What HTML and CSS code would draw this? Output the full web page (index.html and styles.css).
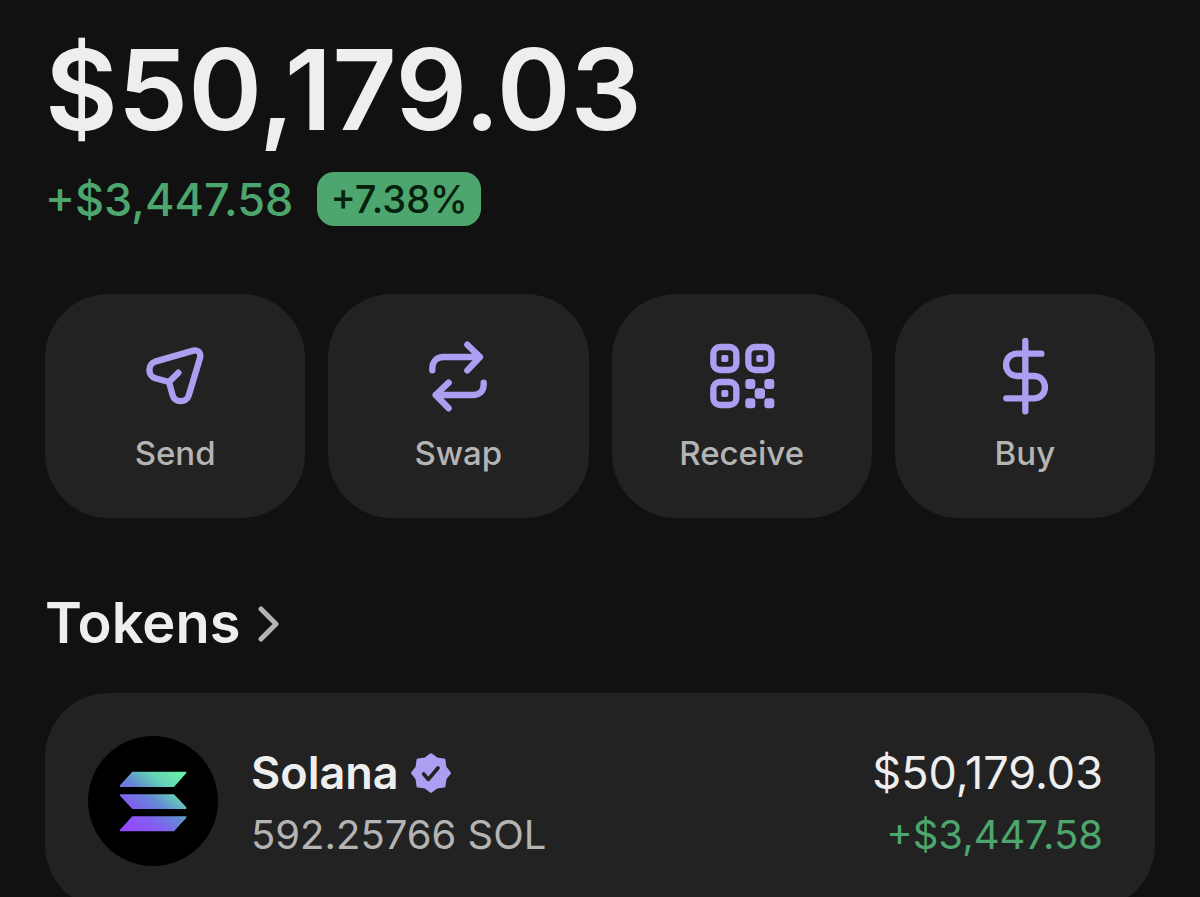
FILE: index.html
```html
<!DOCTYPE html>
<html lang="en">
<head>
<meta charset="utf-8">
<meta name="viewport" content="width=device-width, initial-scale=1">
<title>Wallet</title>
<link rel="stylesheet" href="styles.css">
</head>
<body>
<main class="wallet">
  <h1 class="balance">$50,179.03</h1>
  <div class="change">
    <span class="change-amount">+$3,447.58</span>
    <span class="change-pill">+7.38%</span>
  </div>

  <div class="actions">
    <button class="action" type="button">
      <svg class="action-icon" viewBox="44 18 240 240" aria-hidden="true">
        <path d="M219 62L104 95C82 102 81 138 105 145L146 156L157 196C163 218 198 220 205 197L239 84C243 69 233 58 219 62ZM146 156L174 128"/>
      </svg>
      <span>Send</span>
    </button>
    <button class="action" type="button">
      <svg class="action-icon" viewBox="55 18 240 240" aria-hidden="true">
        <path d="M98 121V115C98 95 111 81 132 81H240M203 44L241 81L203 121M252 158V164C252 184 239 195 218 195H108M147 158L108 195L147 235"/>
      </svg>
      <span>Swap</span>
    </button>
    <button class="action" type="button">
      <svg class="action-icon" viewBox="35 18 240 240" aria-hidden="true">
        <rect x="69" y="51" width="69" height="69" rx="20"/>
        <rect x="174" y="51" width="69" height="69" rx="20"/>
        <rect x="69" y="156" width="69" height="69" rx="20"/>
        <g class="solid">
          <rect x="93" y="75" width="21" height="21" rx="5"/>
          <rect x="198" y="75" width="21" height="21" rx="5"/>
          <rect x="93" y="180" width="21" height="21" rx="5"/>
          <rect x="165" y="147" width="30" height="30" rx="9"/>
          <rect x="222" y="147" width="30" height="30" rx="9"/>
          <rect x="193" y="175" width="31" height="31" rx="9"/>
          <rect x="165" y="205" width="30" height="30" rx="9"/>
          <rect x="222" y="205" width="30" height="30" rx="9"/>
        </g>
      </svg>
      <span>Receive</span>
    </button>
    <button class="action" type="button">
      <svg class="action-icon" viewBox="45 18 240 240" aria-hidden="true">
        <path d="M166 33V244M214 71H142C97 71 97 138 142 138H191C236 138 236 205 191 205H109"/>
      </svg>
      <span>Buy</span>
    </button>
  </div>

  <section>
    <h2 class="section-title">
      <a class="section-link" href="#tokens">Tokens
        <svg class="chevron" viewBox="0 0 22 38" aria-hidden="true"><path d="M3 5L18 20L3 35"/></svg>
      </a>
    </h2>
    <ul class="tokens" id="tokens">
      <li>
        <a class="token" href="#solana">
          <svg class="token-logo" viewBox="0 0 390 390" role="img" aria-label="Solana logo">
            <defs>
              <linearGradient id="sol" gradientUnits="userSpaceOnUse" x1="125" y1="285" x2="270" y2="105">
                <stop offset="0" stop-color="#9448ff"/>
                <stop offset="0.25" stop-color="#855cf2"/>
                <stop offset="0.5" stop-color="#6387d5"/>
                <stop offset="0.75" stop-color="#65d3b6"/>
                <stop offset="1" stop-color="#6aeda9"/>
              </linearGradient>
            </defs>
            <circle cx="195" cy="195" r="195"/>
            <path fill="url(#sol)" d="M133 107H295V111L258 153H96V148ZM96 175H258L295 214V219H133L96 179ZM133 241H295V245L258 286H96V281Z"/>
          </svg>
          <span class="token-text">
            <span class="token-name">Solana
              <svg class="verified" viewBox="-60 -60 120 120" role="img" aria-label="Verified">
                <path class="seal" d="M0-55L17-42L39-39L42-17L55 0L42 17L39 39L17 42L0 55L-17 42L-39 39L-42 17L-55 0L-42-17L-39-39L-17-42Z"/>
                <path class="tick" d="M-22 3L-8 19L21-15"/>
              </svg>
            </span>
            <span class="token-amount">592.25766 SOL</span>
          </span>
          <span class="token-text token-value">
            <span class="token-fiat">$50,179.03</span>
            <span class="token-gain">+$3,447.58</span>
          </span>
        </a>
      </li>
    </ul>
  </section>
</main>
</body>
</html>
```
FILE: styles.css
```css
:root {
  --bg: #111111;
  --card: #222222;
  --text: #eeeeee;
  --muted: #b4b4b4;
  --green: #4da66d;
  --accent: #ab9ff2;
}

* {
  box-sizing: border-box;
}

html {
  scrollbar-width: none;
}

body {
  margin: 0;
  background: var(--bg);
  color: var(--text);
  font-family: Inter, "Liberation Sans", sans-serif;
}

a {
  color: inherit;
  text-decoration: none;
}

.wallet {
  padding: 33px 45px;
}

.balance {
  margin: 0;
  font-size: 112px;
  line-height: 112px;
  font-weight: 600;
}

.change {
  display: flex;
  align-items: flex-start;
  gap: 24px;
  margin-top: 27px;
  font-weight: 500;
}

.change-amount {
  color: var(--green);
  font-size: 45px;
  line-height: 56px;
}

.change-pill {
  padding: 0 13px;
  border-radius: 17px;
  background: var(--green);
  color: #04210d;
  font-size: 38px;
  line-height: 54px;
}

.actions {
  display: grid;
  grid-template-columns: repeat(4, 1fr);
  gap: 23px;
  margin-top: 66px;
}

.action {
  display: flex;
  flex-direction: column;
  align-items: center;
  gap: 17px;
  padding: 42px 8px 45px;
  border: 0;
  border-radius: 64px;
  background: var(--card);
  color: var(--muted);
  font: inherit;
  font-size: 33px;
  line-height: 40px;
  font-weight: 500;
}

.action-icon {
  width: 80px;
  height: 80px;
  fill: none;
  stroke: var(--accent);
  stroke-width: 19px;
  stroke-linecap: round;
  stroke-linejoin: round;
}

.solid {
  fill: var(--accent);
  stroke: none;
}

.section-title {
  margin: 70px 0 35px;
  font-size: 56px;
  line-height: 70px;
  font-weight: 600;
}

.section-link {
  display: inline-flex;
  align-items: center;
  gap: 18px;
}

.chevron {
  width: 22px;
  height: 38px;
  fill: none;
  stroke: var(--muted);
  stroke-width: 5px;
  stroke-linecap: round;
  stroke-linejoin: round;
}

.tokens {
  margin: 0;
  padding: 0;
  list-style: none;
}

.token {
  display: flex;
  align-items: center;
  gap: 33px;
  padding: 43px 52px 43px 43px;
  border-radius: 64px;
  background: var(--card);
}

.token-logo {
  flex: none;
  width: 130px;
  height: 130px;
}

.token-text {
  display: flex;
  flex-direction: column;
  padding-top: 6px;
  line-height: 62px;
}

.token-value {
  margin-left: auto;
  align-items: flex-end;
}

.token-name {
  display: flex;
  align-items: center;
  gap: 12px;
  font-size: 45px;
  font-weight: 600;
}

.verified {
  width: 40px;
  height: 40px;
}

.seal {
  fill: var(--accent);
  stroke: var(--accent);
  stroke-width: 9px;
  stroke-linejoin: round;
}

.tick {
  fill: none;
  stroke: var(--card);
  stroke-width: 11px;
  stroke-linecap: round;
  stroke-linejoin: round;
}

.token-amount,
.token-gain {
  font-size: 40px;
}

.token-amount {
  color: var(--muted);
}

.token-gain {
  color: var(--green);
}

.token-fiat {
  font-size: 45px;
}
```
